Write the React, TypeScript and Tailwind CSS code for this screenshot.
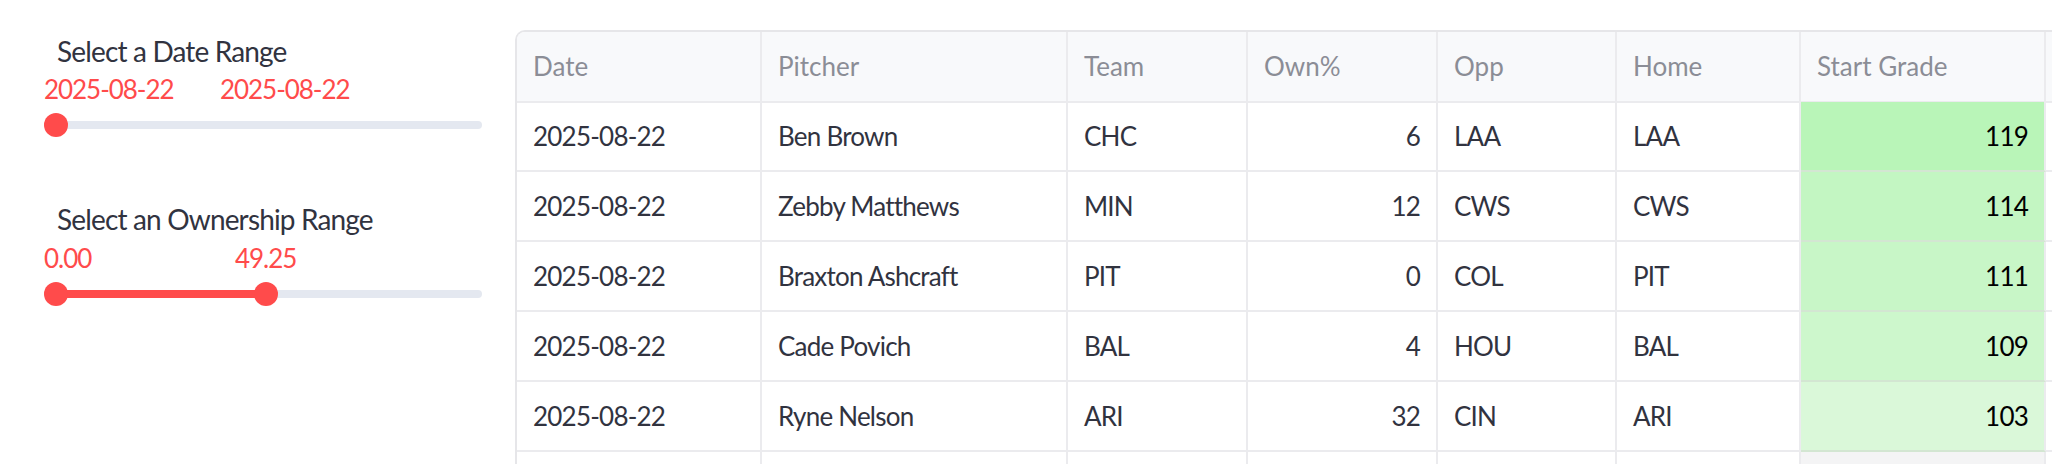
import React from "react";

type Row = {
  date: string;
  pitcher: string;
  team: string;
  own: number;
  opp: string;
  home: string;
  grade: number;
  gradeBg: string;
};

const rows: Row[] = [
  { date: "2025-08-22", pitcher: "Ben Brown", team: "CHC", own: 6, opp: "LAA", home: "LAA", grade: 119, gradeBg: "bg-[#b9f5b8]" },
  { date: "2025-08-22", pitcher: "Zebby Matthews", team: "MIN", own: 12, opp: "CWS", home: "CWS", grade: 114, gradeBg: "bg-[#c3f6c2]" },
  { date: "2025-08-22", pitcher: "Braxton Ashcraft", team: "PIT", own: 0, opp: "COL", home: "PIT", grade: 111, gradeBg: "bg-[#c8f6c7]" },
  { date: "2025-08-22", pitcher: "Cade Povich", team: "BAL", own: 4, opp: "HOU", home: "BAL", grade: 109, gradeBg: "bg-[#cdf7cc]" },
  { date: "2025-08-22", pitcher: "Ryne Nelson", team: "ARI", own: 32, opp: "CIN", home: "ARI", grade: 103, gradeBg: "bg-[#daf8d9]" },
];

const headers = ["Date", "Pitcher", "Team", "Own%", "Opp", "Home", "Start Grade", ""];

const cell = "border-r-2 border-b-2 border-[#ebebee] px-4 flex items-center whitespace-nowrap overflow-hidden";
const body = `${cell} tracking-[-0.03em]`;

function Slider({ left, right, rightAt, lo, hi, fill }: { left: string; right: string; rightAt: number; lo: number; hi: number; fill: boolean }) {
  // lo / hi are thumb centres in px from the track start
  return (
    <div className="relative w-[438px]">
      <div className="h-[34px] text-[26px] leading-[34px] tracking-[-0.04em] text-[#ff4b4b]">
        <span>{left}</span>
        <span className="absolute top-0" style={{ left: rightAt }}>{right}</span>
      </div>
      <div className="relative mt-[7px] h-[24px] w-[438px]">
        <div className="absolute left-0 right-0 top-[8px] h-[8px] rounded-full bg-[#e4e8f0]" />
        {fill && (
          <div className="absolute top-[8px] h-[8px] bg-[#ff4b4b]" style={{ left: lo, width: hi - lo }} />
        )}
        <div className="absolute top-0 h-[24px] w-[24px] rounded-full bg-[#ff4b4b]" style={{ left: lo - 12 }} />
        {fill && <div className="absolute top-0 h-[24px] w-[24px] rounded-full bg-[#ff4b4b]" style={{ left: hi - 12 }} />}
      </div>
    </div>
  );
}

export default function App() {
  return (
    <div className="flex h-[464px] w-[2052px] overflow-hidden bg-white font-['Lato',sans-serif]">
      {/* filters */}
      <div className="w-[515px] shrink-0 pl-[44px] pt-[34px]">
        <div className="pl-[13px] text-[28px] leading-[34px] tracking-[-0.03em] text-[#31333f]">Select a Date Range</div>
        <div className="mt-[4px]">
          <Slider left="2025-08-22" right="2025-08-22" rightAt={176} lo={12} hi={12} fill={false} />
        </div>
        <div className="mt-[65px] pl-[13px] text-[28px] leading-[34px] tracking-[-0.03em] text-[#31333f]">Select an Ownership Range</div>
        <div className="mt-[5px]">
          <Slider left="0.00" right="49.25" rightAt={191} lo={12} hi={222} fill={true} />
        </div>
      </div>

      {/* table */}
      <div className="mt-[30px] h-[500px] shrink-0 overflow-hidden rounded-tl-[10px] border-l-2 border-t-2 border-[#e6e6e9]">
        <div className="grid grid-cols-[245px_306px_180px_190px_179px_184px_245px_200px] auto-rows-[70px] text-[26px] text-[#31333f]">
          {headers.map((h, i) => (
            <div key={i} className={`${cell} h-[71px] bg-[#f8f9fb] text-[#8b8d96]`}>
              {h}
            </div>
          ))}
          {rows.map((r, i) => (
            <React.Fragment key={i}>
              <div className={body}>{r.date}</div>
              <div className={body}>{r.pitcher}</div>
              <div className={body}>{r.team}</div>
              <div className={`${body} justify-end`}>{r.own}</div>
              <div className={body}>{r.opp}</div>
              <div className={body}>{r.home}</div>
              <div className={`${body} justify-end border-b-[#d3e6d2] text-black ${r.gradeBg}`}>{r.grade}</div>
              <div className={body} />
            </React.Fragment>
          ))}
          <div className={cell} />
          <div className={cell} />
          <div className={cell} />
          <div className={cell} />
          <div className={cell} />
          <div className={cell} />
          <div className={`${cell} bg-[#f4f4f5]`} />
          <div className={cell} />
        </div>
      </div>
    </div>
  );
}
